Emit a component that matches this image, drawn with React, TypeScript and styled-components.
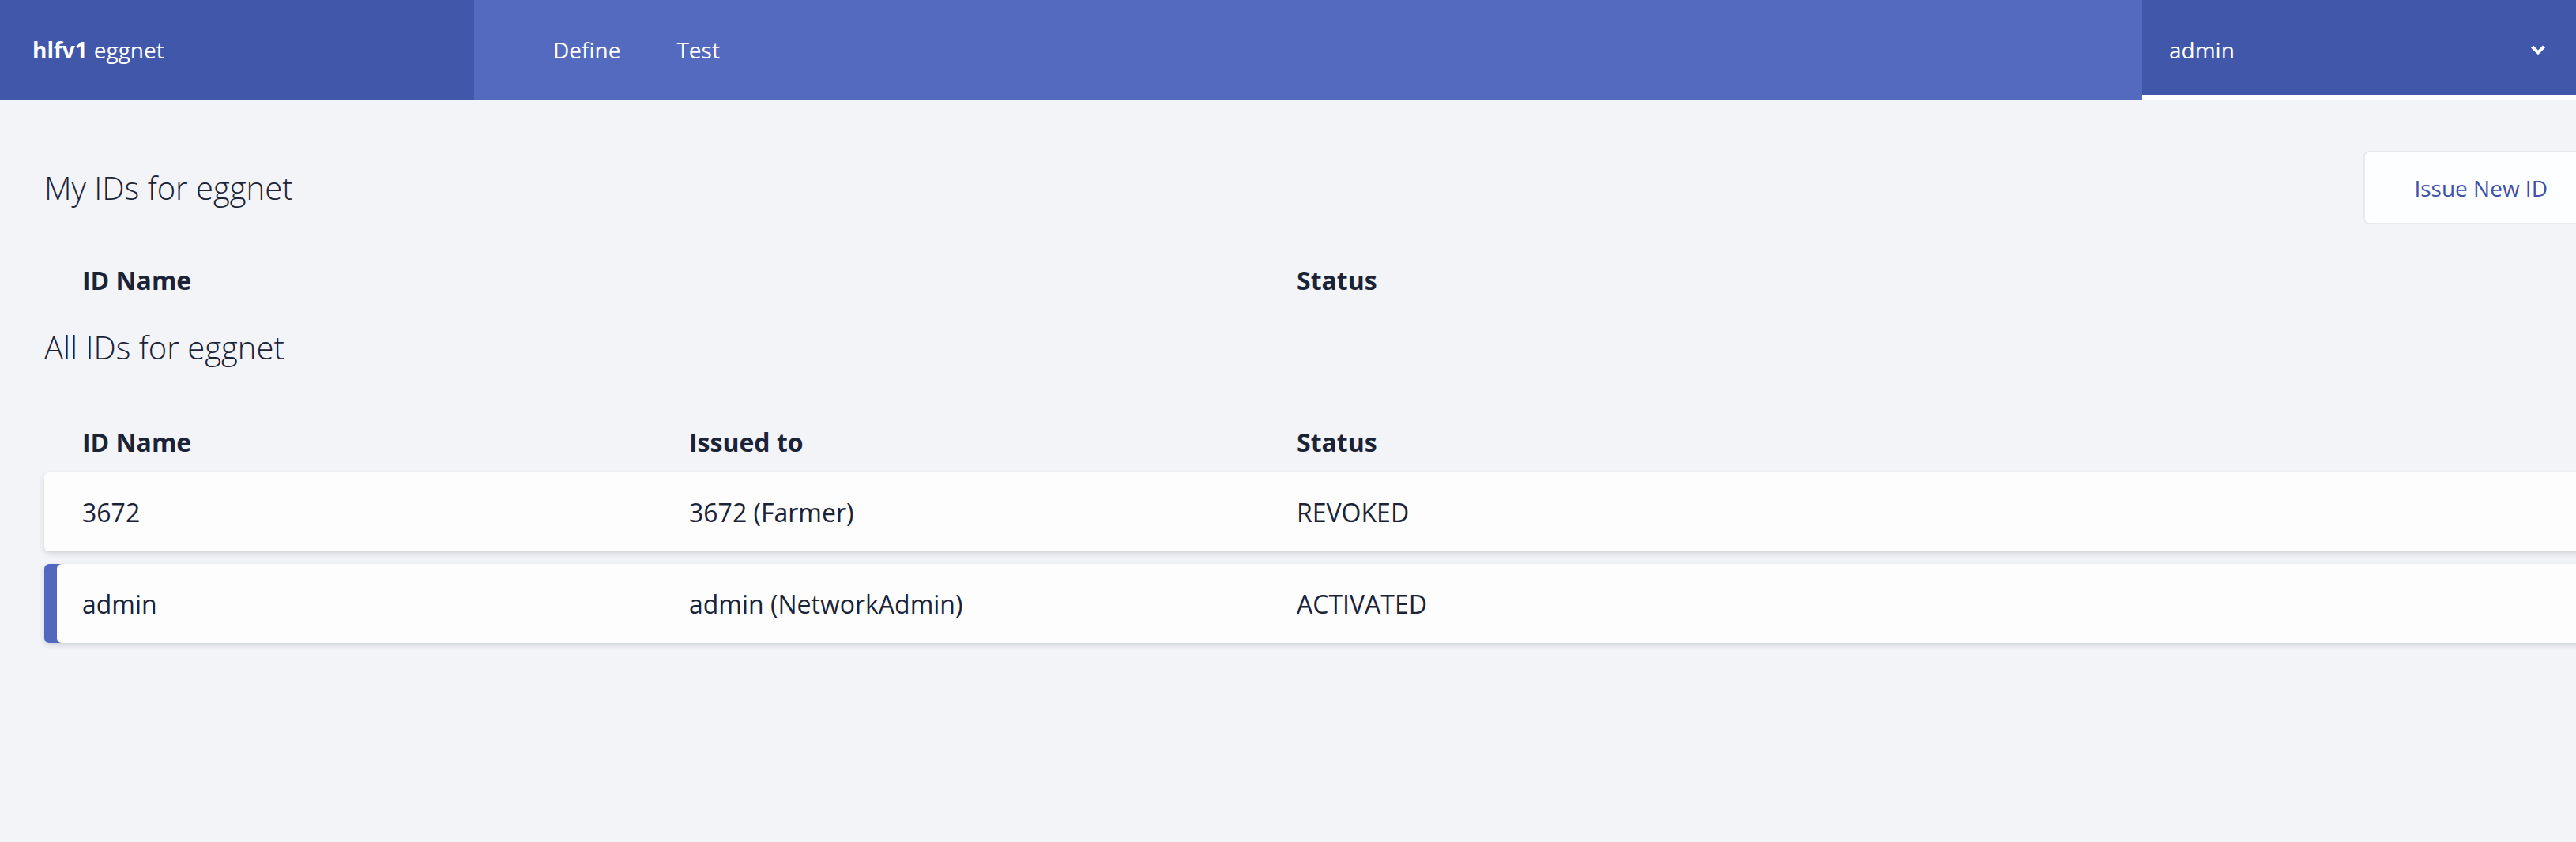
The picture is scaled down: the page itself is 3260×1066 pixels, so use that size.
import React from "react";
import styled, { createGlobalStyle } from "styled-components";

const GlobalStyle = createGlobalStyle`
  html, body {
    margin: 0;
    padding: 0;
    overflow: hidden;
    background: #f2f4f8;
  }
  body {
    font-family: "Open Sans", "Noto Sans", "Liberation Sans", sans-serif;
    color: #1b2336;
  }
  * { box-sizing: border-box; }
`;

const Page = styled.div`
  width: 100%;
  min-height: 1066px;
  background: #f2f4f8;
`;

const Header = styled.header`
  display: flex;
  height: 126px;
  width: 100%;
`;

const Brand = styled.div`
  width: 600px;
  flex: none;
  background: #4157aa;
  display: flex;
  align-items: center;
  padding-left: 41px;
  color: #ffffff;
  font-size: 28px;
  b { font-weight: 700; }
  span { font-weight: 400; margin-left: 8px; }
`;

const Nav = styled.nav`
  flex: 1;
  background: #546abe;
  display: flex;
  align-items: center;
  padding-left: 100px;
  gap: 71px;
`;

const NavLink = styled.a`
  color: #ffffff;
  font-size: 28px;
  font-weight: 400;
  text-decoration: none;
`;

const UserMenu = styled.div`
  width: 549px;
  flex: none;
  background: #4157aa;
  border-bottom: 6px solid #ffffff;
  display: flex;
  align-items: center;
  justify-content: space-between;
  padding: 6px 38px 0 34px;
  color: #ffffff;
  font-size: 28px;
`;

const Main = styled.main`
  width: calc(100% + 26px);
  padding: 65px 0 0 56px;
`;

const TitleRow = styled.div`
  display: flex;
  align-items: center;
  justify-content: space-between;
  height: 93px;
`;

const Title = styled.h2<{ $top?: number }>`
  margin: ${(p) => p.$top ?? 0}px 0 0 0;
  font-size: 40px;
  font-weight: 300;
  line-height: 54px;
  color: #1b2336;
`;

const IssueButton = styled.button`
  height: 93px;
  padding: 0 62px;
  background: #fdfeff;
  border: 2px solid #e4eaed;
  border-right: none;
  border-radius: 7px 0 0 7px;
  color: #3f51a8;
  font-family: inherit;
  font-size: 28px;
  font-weight: 400;
`;

const Columns = `
  display: grid;
  grid-template-columns: 768px 769px 1fr;
  padding-left: 48px;
`;

const HeadRow = styled.div<{ $top: number }>`
  ${Columns}
  margin-top: ${(p) => p.$top}px;
  height: 44px;
  line-height: 44px;
  font-size: 32px;
  font-weight: 700;
  color: #1b2336;
`;

const RowList = styled.div`
  display: flex;
  flex-direction: column;
  gap: 16px;
  margin-top: 16px;
`;

const Row = styled.div<{ $active?: boolean }>`
  ${Columns}
  align-items: center;
  height: 100px;
  background: #fdfdfd;
  border-radius: 6px 0 0 6px;
  box-shadow: ${(p) =>
    p.$active
      ? "inset 16px 0 0 #5467bf, 0 3px 7px rgba(40, 50, 70, 0.16)"
      : "0 3px 7px rgba(40, 50, 70, 0.16)"};
  font-size: 32px;
  font-weight: 400;
  color: #1b2336;
`;

const Chevron = () => (
  <svg width="20" height="14" viewBox="0 0 20 14" aria-hidden="true">
    <path
      d="M2.5 3 L10 10.5 L17.5 3"
      fill="none"
      stroke="#ffffff"
      strokeWidth="4"
      strokeLinejoin="miter"
    />
  </svg>
);

const ids = [
  { name: "3672", issued: "3672 (Farmer)", status: "REVOKED", active: false },
  { name: "admin", issued: "admin (NetworkAdmin)", status: "ACTIVATED", active: true },
];

export default function App() {
  return (
    <Page>
      <GlobalStyle />
      <Header>
        <Brand>
          <b>hlfv1</b>
          <span>eggnet</span>
        </Brand>
        <Nav>
          <NavLink>Define</NavLink>
          <NavLink>Test</NavLink>
        </Nav>
        <UserMenu>
          <span>admin</span>
          <Chevron />
        </UserMenu>
      </Header>
      <Main>
        <TitleRow>
          <Title>My IDs for eggnet</Title>
          <IssueButton>Issue New ID</IssueButton>
        </TitleRow>
        <HeadRow $top={49}>
          <div>ID Name</div>
          <div />
          <div>Status</div>
        </HeadRow>
        <Title $top={36}>All IDs for eggnet</Title>
        <HeadRow $top={71}>
          <div>ID Name</div>
          <div>Issued to</div>
          <div>Status</div>
        </HeadRow>
        <RowList>
          {ids.map((id) => (
            <Row key={id.name} $active={id.active}>
              <div>{id.name}</div>
              <div>{id.issued}</div>
              <div>{id.status}</div>
            </Row>
          ))}
        </RowList>
      </Main>
    </Page>
  );
}
